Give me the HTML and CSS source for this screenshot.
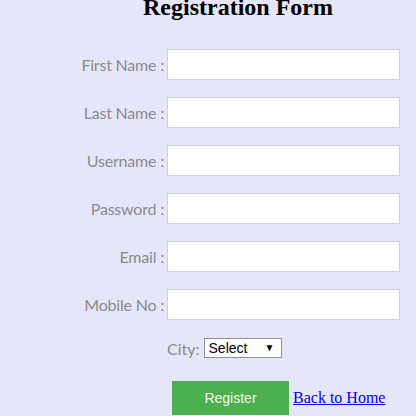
FILE: index.html
```html
<!DOCTYPE html>
<html>
<head>
<meta charset="utf-8">
<link rel="stylesheet" href="styles.css">
</head>
<body>
<div class="page">
  <h2 class="title">Registration Form</h2>
  <form class="form">
    <label class="lbl">First Name :</label><input class="field" type="text">
    <label class="lbl">Last Name :</label><input class="field" type="text">
    <label class="lbl">Username :</label><input class="field" type="text">
    <label class="lbl">Password :</label><input class="field" type="password">
    <label class="lbl">Email :</label><input class="field" type="text">
    <label class="lbl">Mobile No :</label><input class="field" type="text">
    <div class="city-row">
      <span class="city-lbl">City:</span>
      <span class="sel-wrap"><select class="sel"><option>Select</option></select><span class="arrow">▼</span></span>
    </div>
    <div class="btn-row">
      <button class="btn" type="button">Register</button>
      <a class="home" href="#">Back to Home</a>
    </div>
  </form>
</div>
</body>
</html>
```
FILE: styles.css
```css
html, body {
  margin: 0;
  padding: 0;
  background: #e6e6fa;
}
.page {
  width: 416px;
  height: 416px;
  overflow: hidden;
}
.title {
  margin: -5px 0 0 60px;
  width: 356px;
  text-align: center;
  font-family: "Liberation Serif", "Times New Roman", serif;
  font-size: 24px;
  font-weight: bold;
  line-height: 24px;
  color: #000;
}
.form {
  margin-top: 30px;
  display: grid;
  grid-template-columns: 164px 233px;
  column-gap: 3px;
  row-gap: 17px;
  align-items: center;
}
.lbl {
  text-align: right;
  font-family: Lato, "Open Sans", sans-serif;
  font-size: 16px;
  letter-spacing: -0.2px;
  color: #8a8a8a;
}
.field {
  box-sizing: border-box;
  height: 31px;
  width: 233px;
  margin: 0;
  border: 1px solid #cfcfd6;
  background: #fff;
  padding: 0 6px;
}
.city-row {
  grid-column: 2;
  margin-top: 1px;
  display: flex;
  align-items: center;
  gap: 4px;
  height: 20px;
}
.city-lbl {
  font-family: Lato, "Open Sans", sans-serif;
  font-size: 16px;
  color: #8a8a8a;
}
.sel-wrap {
  position: relative;
  display: inline-block;
}
.sel {
  appearance: none;
  -webkit-appearance: none;
  box-sizing: border-box;
  width: 78px;
  height: 20px;
  margin: 0;
  padding: 0 0 0 4px;
  border: 1px solid #8f8f8f;
  border-radius: 0;
  background: #fff;
  font-family: "Liberation Sans", Arial, sans-serif;
  font-size: 14px;
  color: #000;
}
.arrow {
  position: absolute;
  right: 7px;
  top: 4px;
  font-size: 10px;
  line-height: 11px;
  color: #000;
  pointer-events: none;
}
.btn-row {
  grid-column: 2;
  margin-top: 6px;
  padding-left: 5px;
  display: flex;
  align-items: center;
  gap: 4px;
}
.btn {
  width: 117px;
  height: 34px;
  border: none;
  margin: 0;
  background: #4caf50;
  color: #f4f8ec;
  font-family: "Liberation Sans", Arial, sans-serif;
  font-size: 14px;
}
.home {
  font-family: "Liberation Serif", "Times New Roman", serif;
  font-size: 16px;
  color: #0000ee;
  text-decoration: underline;
}
```
